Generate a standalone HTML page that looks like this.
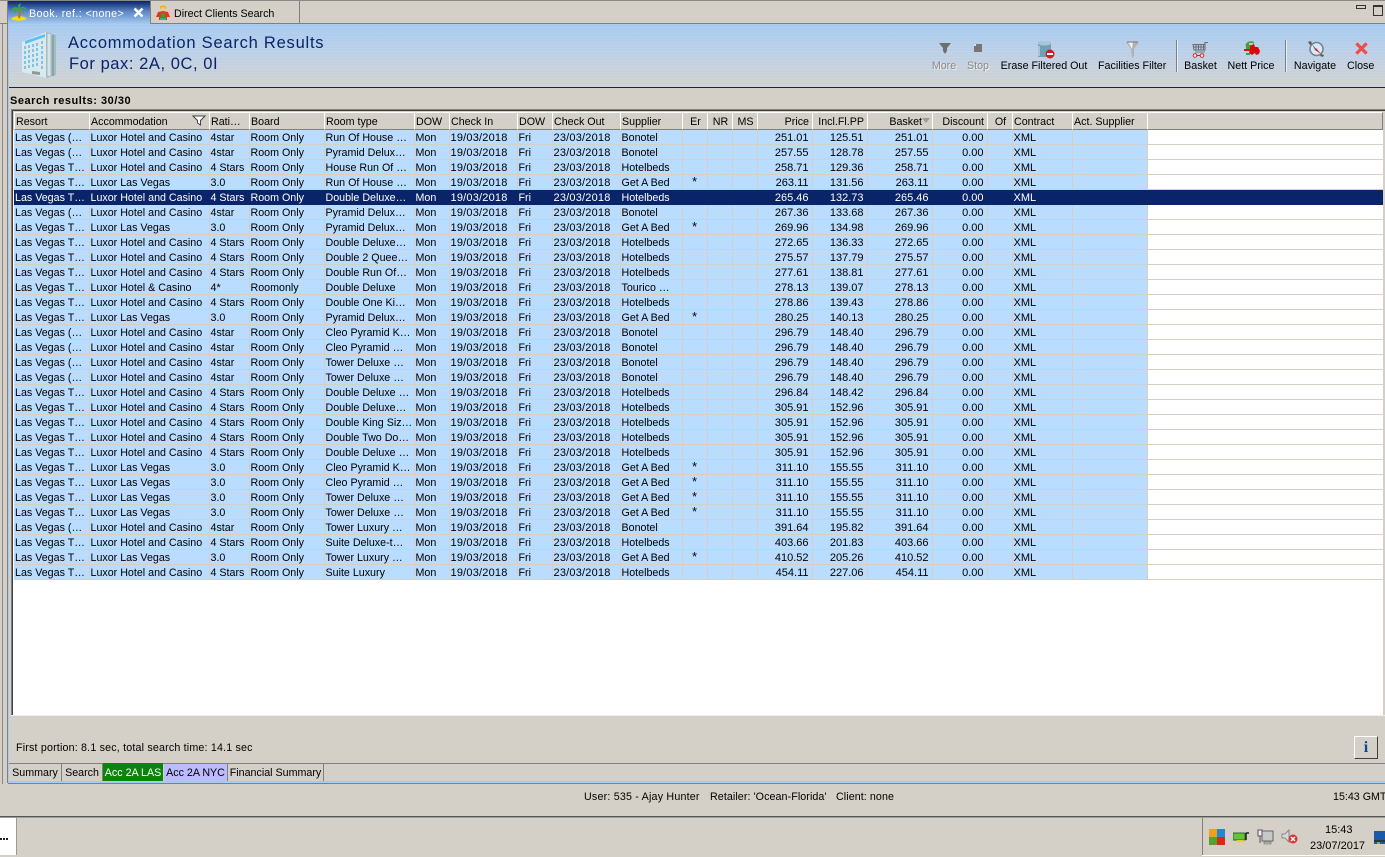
<!DOCTYPE html>
<html><head><meta charset="utf-8"><title>Accommodation Search Results</title>
<style>
html,body{margin:0;padding:0;width:1385px;height:857px;overflow:hidden;background:#d4d0c8}
body{position:relative;font:10.7px "Liberation Sans",Arial,sans-serif;color:#000}
div,svg{position:absolute}
.l{white-space:nowrap}
#hd div{position:absolute;top:0;height:16px;line-height:18px;background:#d4d0c8;border-top:1px solid #fff;border-left:1px solid #fff;border-right:1px solid #808080;border-bottom:1px solid #808080;padding:0 0 0 1px;white-space:nowrap;box-sizing:content-box;overflow:hidden}
#hd div.r{text-align:right}
table{position:absolute;left:14px;top:130px;border-collapse:collapse;table-layout:fixed;width:1369px;background:#fff}
td{height:12px;padding:2px 0 0 1px;border-right:1px solid #d4d0c8;border-bottom:1px solid #d4d0c8;background:#b9dcff;white-space:nowrap;overflow:hidden;line-height:12px}
td:nth-child(7),td:nth-child(9){font-size:11px;letter-spacing:.2px}
td:nth-child(n+14):nth-child(-n+17){text-align:right;padding:2px 3px 0 0;font-size:11px}
td:nth-child(11){text-align:center;padding:1px 0 0;height:13px;font-size:12.5px;line-height:13px;vertical-align:top}
td:nth-child(19){font-size:11px}
td:last-child{background:#fff;border-right:0}
tr.s td{background:#0a246a;color:#fff;border-color:#0a246a}
.t{text-align:center;white-space:nowrap;top:60px;height:13px;line-height:13px}
.b{position:absolute;top:763px;height:17px;line-height:18px;border-right:1px solid #808080;text-align:center;white-space:nowrap}
</style></head>
<body>
<!-- top chrome -->
<div style="left:0;top:0;width:1385px;height:1px;background:#8a8a88"></div>
<div style="left:0;top:23px;width:1385px;height:1px;background:#808080"></div>
<div style="left:2px;top:24px;width:1px;height:760px;background:#8a8a88"></div>
<div style="left:7px;top:1px;width:1px;height:782px;background:#808080"></div>
<div style="left:8px;top:24px;width:1px;height:758px;background:#a6caf0"></div>
<div style="left:8px;top:781px;width:1377px;height:2px;background:#a6caf0"></div>
<div style="left:8px;top:783px;width:1377px;height:1px;background:#808080"></div>
<!-- tabs -->
<div style="left:8px;top:1px;width:142px;height:23px;background:linear-gradient(#0a246a,#5d86c4 45%,#a6caf0)"></div>
<div style="left:150px;top:1px;width:1px;height:23px;background:#808080"></div>
<div style="left:299px;top:1px;width:1px;height:22px;background:#808080"></div>
<svg style="left:10px;top:3px" width="18" height="18" viewBox="0 0 18 18"><ellipse cx="9" cy="15.500" rx="7.500" ry="2.200" fill="#f5dc10"/><path d="M9 15C10 11 10 8 9.500 6" stroke="#b8741a" stroke-width="2" fill="none"/><path d="M9 6C6 3 3 4 1 8 4 6.500 6 6 9 6ZM9 6C7 2 9 1 11 0 10 3 10 4 9 6ZM9 6C12 3 15 3 17 7 14 5 12 5 9 6ZM9 6C6 6 4 8 4 11 6 9 7 8 9 6ZM9 6C12 6 14 8 14 11 12 9 11 8 9 6Z" fill="#2fb53c"/></svg>
<div class="l" style="left:29px;top:7px;color:#fff;height:14px;line-height:14px;letter-spacing:.4px">Book. ref.: &lt;none&gt;</div>
<svg style="left:133px;top:7px" width="11" height="11" viewBox="0 0 11 11"><path d="M1.500 1.500L9.500 9.500M9.500 1.500L1.500 9.500" stroke="#fff" stroke-width="2.600"/></svg>
<svg style="left:155px;top:4px" width="16" height="17" viewBox="0 0 16 17"><path d="M5 3C5 1 11 1 11 3V5H5Z" fill="#f0b010"/><circle cx="8" cy="5.500" r="2.500" fill="#f3c68a"/><path d="M3 8L8 7 13 8 15 13H12V16H4V13H1Z" fill="#e03818"/><rect x="6" y="9" width="4" height="4" fill="#30a040"/><rect x="5" y="14" width="6" height="2" fill="#30b0a0"/></svg>
<div class="l" style="left:174px;top:7px;height:14px;line-height:14px">Direct Clients Search</div>
<!-- window buttons -->
<div style="left:1356px;top:5px;width:8px;height:2px;border:1px solid #333;background:#d4d0c8"></div>
<div style="left:1373px;top:5px;width:8px;height:8px;border:1px solid #333;border-top-width:2px;background:#d4d0c8"></div>
<!-- band -->
<div style="left:9px;top:24px;width:1376px;height:63px;background:repeating-linear-gradient(rgba(255,255,255,.07) 0 1px,rgba(255,255,255,0) 1px 3px),linear-gradient(#a6caf0,#bcd0e8 45%,#d2d2d0)"></div>
<div style="left:9px;top:87px;width:1376px;height:1px;background:#0a246a"></div>
<svg style="left:22px;top:32px" width="35" height="46" viewBox="0 0 35 46"><path d="M0 10L24 0V46L0 40Z" fill="#dbe8ec"/><path d="M24 0L34 3V43L24 46Z" fill="#a2bcc0"/><path d="M27 2V44" stroke="#d5e4e6" stroke-width="3"/><path d="M31 3V44" stroke="#8aa4a8" stroke-width="2"/><path d="M3 9L23 2V5L3 12Z" fill="#5cc0f4"/><g fill="#7cc4ee"><path d="M2 14H4V17H2ZM2 19H4V22H2ZM2 24H4V27H2ZM2 29H4V32H2ZM2 34H4V37H2ZM6 13H8V16H6ZM6 18H8V21H6ZM6 23H8V26H6ZM6 28H8V31H6ZM6 33H8V36H6ZM10 12H12V15H10ZM10 17H12V20H10ZM10 22H12V25H10ZM10 27H12V30H10ZM10 32H12V35H10ZM14 11H16V14H14ZM14 16H16V19H14ZM14 21H16V24H14ZM14 26H16V29H14ZM14 31H16V34H14ZM19 9H21V12H19ZM19 14H21V17H19ZM19 19H21V22H19ZM19 24H21V27H19ZM19 29H21V32H19ZM19 34H21V37H19Z"/></g><path d="M10 39L18 40V43L10 42Z" fill="#8a9a9a"/></svg>
<div class="l" style="left:68px;top:34px;height:19px;line-height:19px;font-size:16.500px;letter-spacing:.77px;color:#0a246a">Accommodation Search Results</div>
<div class="l" style="left:69px;top:55px;height:19px;line-height:19px;font-size:16.500px;letter-spacing:.56px;color:#0a246a">For pax: 2A, 0C, 0I</div>
<!-- toolbar -->
<svg style="left:938px;top:43px" width="14" height="11" viewBox="0 0 14 11"><path d="M1 0H13L9 5V8L7 11 5 8V5Z" fill="#6e6e6e"/></svg>
<div style="left:974px;top:44px;width:8px;height:8px;background:#767676"></div>
<div style="left:974px;top:44px;width:2px;height:2px;background:#ddd"></div>
<div class="t" style="left:930px;width:28px;color:#8a8a8a;text-shadow:1px 1px 0 #eee">More</div>
<div class="t" style="left:965px;width:26px;color:#8a8a8a;text-shadow:1px 1px 0 #eee">Stop</div>
<svg style="left:1037px;top:41px" width="18" height="18" viewBox="0 0 18 18"><path d="M1 2C1 0 14 0 14 2V16H1Z" fill="#6ea0b8"/><ellipse cx="7.500" cy="2.500" rx="6.500" ry="2" fill="#a8c6d6"/><path d="M2 5V15" stroke="#b9d2de" stroke-width="1.500"/><circle cx="13" cy="13" r="4.500" fill="#d91a24"/><rect x="10" y="12" width="6" height="2" fill="#fff"/></svg>
<div class="t" style="left:1000px;width:88px">Erase Filtered Out</div>
<svg style="left:1126px;top:41px" width="13" height="17" viewBox="0 0 13 17"><path d="M0 1H13L8 8V15L6 17 5 8Z" fill="#b2b2b2"/><path d="M2 1H7L6 8Z" fill="#f0f0f0"/><path d="M1 1H12" stroke="#777"/></svg>
<div class="t" style="left:1098px;width:68px">Facilities Filter</div>
<div style="left:1176px;top:40px;width:1px;height:32px;background:#7a7f88"></div>
<div style="left:1177px;top:40px;width:1px;height:32px;background:#e8eef5"></div>
<svg style="left:1192px;top:41px" width="17" height="17" viewBox="0 0 17 17"><path d="M1 3.500H13V9H2ZM1.500 6H13M4 3.500V9M6.500 3.500V9M9 3.500V9M11.500 3.500V9M13 9V1.500H16" stroke="#6a6a70" stroke-width="1" fill="none"/><path d="M3 11H13" stroke="#777"/><circle cx="3" cy="14.500" r="1.800" fill="#fff" stroke="#d02020"/><circle cx="10" cy="14.500" r="1.800" fill="#fff" stroke="#d02020"/><path d="M5 14.500H8" stroke="#d02020"/></svg>
<div class="t" style="left:1183px;width:35px">Basket</div>
<svg style="left:1243px;top:40px" width="18" height="17" viewBox="0 0 18 17"><path d="M3 7C1 2 8 0 11 2L9 9H3Z" fill="#4b9b3c"/><path d="M6 3H10V5H6Z" fill="#b6d8a8"/><path d="M1 9H8V11H1Z" fill="#e01010"/><path d="M7 6L11 4 12 7 15 7 17 11 16 14 13 15 12 13 9 15 6 13 7 9Z" fill="#d80a0a"/><path d="M3 13H7V15H3Z" fill="#4b9b3c"/></svg>
<div class="t" style="left:1227px;width:48px">Nett Price</div>
<div style="left:1285px;top:40px;width:1px;height:32px;background:#7a7f88"></div>
<div style="left:1286px;top:40px;width:1px;height:32px;background:#e8eef5"></div>
<svg style="left:1307px;top:40px" width="18" height="18" viewBox="0 0 18 18"><circle cx="9.500" cy="9" r="6.500" fill="#dfe9f2" stroke="#6f8494" stroke-width="1.600"/><path d="M5 4L9 9 8 10Z" fill="#3060c0"/><path d="M9 8L14 14 8 10Z" fill="#d02020"/><path d="M1 2L4 1 5 4 3 5ZM14 14L17 15 16 17 13 16Z" fill="#6b5a40"/></svg>
<div class="t" style="left:1293px;width:44px">Navigate</div>
<svg style="left:1355px;top:42px" width="13" height="13" viewBox="0 0 13 13"><path d="M2.500 2.500L10.500 10.500M10.500 2.500L2.500 10.500" stroke="#ef4c4c" stroke-width="3.200" stroke-linecap="square"/></svg>
<div class="t" style="left:1347px;width:27px">Close</div>
<!-- search label -->
<div class="l" style="left:10px;top:94px;height:14px;line-height:14px;font-size:11px;font-weight:bold;letter-spacing:.53px">Search results: 30/30</div>
<!-- table frame -->
<div style="left:11px;top:109px;width:1372px;height:606px;background:#fff"></div>
<div style="left:11px;top:109px;width:1374px;height:1px;background:#808080"></div>
<div style="left:11px;top:110px;width:1374px;height:1px;background:#404040"></div>
<div style="left:11px;top:109px;width:1px;height:606px;background:#808080"></div>
<div style="left:12px;top:110px;width:1px;height:605px;background:#404040"></div>
<div style="left:11px;top:715px;width:1374px;height:1px;background:#f0eee8"></div>
<div style="left:13px;top:111px;width:1370px;height:19px;background:#d4d0c8"></div>
<div id="hd" style="left:14px;top:112px;width:1369px;height:18px">
<div style="left:0;width:73px">Resort</div>
<div style="left:75px;width:118px">Accommodation</div>
<div style="left:195px;width:38px">Rati…</div>
<div style="left:235px;width:73px">Board</div>
<div style="left:310px;width:88px">Room type</div>
<div style="left:400px;width:33px">DOW</div>
<div style="left:435px;width:66px">Check In</div>
<div style="left:503px;width:33px">DOW</div>
<div style="left:538px;width:66px">Check Out</div>
<div style="left:606px;width:60px">Supplier</div>
<div style="left:668px;width:23px;text-align:center">Er</div>
<div style="left:693px;width:23px;text-align:center">NR</div>
<div style="left:718px;width:23px;text-align:center">MS</div>
<div class="r" style="left:743px;width:50px;padding-right:3px">Price</div>
<div class="r" style="left:798px;width:50px;padding-right:3px">Incl.Fl.PP</div>
<div class="r" style="left:853px;width:53px;padding-right:11px">Basket</div>
<div class="r" style="left:918px;width:50px;padding-right:3px">Discount</div>
<div style="left:973px;width:23px;text-align:center">Of</div>
<div style="left:998px;width:58px">Contract</div>
<div style="left:1058px;width:73px">Act. Supplier</div>
<div style="left:1133px;width:233px"></div>
</div>
<svg style="left:192px;top:115px" width="14" height="11" viewBox="0 0 14 11"><path d="M1 1H13L8.500 5.500V10L5.500 8V5.500Z" fill="#fff" stroke="#444"/></svg>
<svg style="left:922px;top:118px" width="8" height="5" viewBox="0 0 8 5"><path d="M0 0H8L4 5Z" fill="#9a9a9a"/></svg>
<table>
<colgroup><col style="width:75px"><col style="width:120px"><col style="width:40px"><col style="width:75px"><col style="width:90px"><col style="width:35px"><col style="width:68px"><col style="width:35px"><col style="width:68px"><col style="width:62px"><col style="width:25px"><col style="width:25px"><col style="width:25px"><col style="width:55px"><col style="width:55px"><col style="width:65px"><col style="width:55px"><col style="width:25px"><col style="width:60px"><col style="width:75px"><col></colgroup>
<tr><td>Las Vegas (…<td>Luxor Hotel and Casino<td>4star<td>Room Only<td>Run Of House …<td>Mon<td>19/03/2018<td>Fri<td>23/03/2018<td>Bonotel<td><td><td><td>251.01<td>125.51<td>251.01<td>0.00<td><td>XML<td><td></tr>
<tr><td>Las Vegas (…<td>Luxor Hotel and Casino<td>4star<td>Room Only<td>Pyramid Delux…<td>Mon<td>19/03/2018<td>Fri<td>23/03/2018<td>Bonotel<td><td><td><td>257.55<td>128.78<td>257.55<td>0.00<td><td>XML<td><td></tr>
<tr><td>Las Vegas T…<td>Luxor Hotel and Casino<td>4 Stars<td>Room Only<td>House Run Of …<td>Mon<td>19/03/2018<td>Fri<td>23/03/2018<td>Hotelbeds<td><td><td><td>258.71<td>129.36<td>258.71<td>0.00<td><td>XML<td><td></tr>
<tr><td>Las Vegas T…<td>Luxor Las Vegas<td>3.0<td>Room Only<td>Run Of House …<td>Mon<td>19/03/2018<td>Fri<td>23/03/2018<td>Get A Bed<td>*<td><td><td>263.11<td>131.56<td>263.11<td>0.00<td><td>XML<td><td></tr>
<tr class="s"><td>Las Vegas T…<td>Luxor Hotel and Casino<td>4 Stars<td>Room Only<td>Double Deluxe…<td>Mon<td>19/03/2018<td>Fri<td>23/03/2018<td>Hotelbeds<td><td><td><td>265.46<td>132.73<td>265.46<td>0.00<td><td>XML<td><td></tr>
<tr><td>Las Vegas (…<td>Luxor Hotel and Casino<td>4star<td>Room Only<td>Pyramid Delux…<td>Mon<td>19/03/2018<td>Fri<td>23/03/2018<td>Bonotel<td><td><td><td>267.36<td>133.68<td>267.36<td>0.00<td><td>XML<td><td></tr>
<tr><td>Las Vegas T…<td>Luxor Las Vegas<td>3.0<td>Room Only<td>Pyramid Delux…<td>Mon<td>19/03/2018<td>Fri<td>23/03/2018<td>Get A Bed<td>*<td><td><td>269.96<td>134.98<td>269.96<td>0.00<td><td>XML<td><td></tr>
<tr><td>Las Vegas T…<td>Luxor Hotel and Casino<td>4 Stars<td>Room Only<td>Double Deluxe…<td>Mon<td>19/03/2018<td>Fri<td>23/03/2018<td>Hotelbeds<td><td><td><td>272.65<td>136.33<td>272.65<td>0.00<td><td>XML<td><td></tr>
<tr><td>Las Vegas T…<td>Luxor Hotel and Casino<td>4 Stars<td>Room Only<td>Double 2 Quee…<td>Mon<td>19/03/2018<td>Fri<td>23/03/2018<td>Hotelbeds<td><td><td><td>275.57<td>137.79<td>275.57<td>0.00<td><td>XML<td><td></tr>
<tr><td>Las Vegas T…<td>Luxor Hotel and Casino<td>4 Stars<td>Room Only<td>Double Run Of…<td>Mon<td>19/03/2018<td>Fri<td>23/03/2018<td>Hotelbeds<td><td><td><td>277.61<td>138.81<td>277.61<td>0.00<td><td>XML<td><td></tr>
<tr><td>Las Vegas T…<td>Luxor Hotel &amp; Casino<td>4*<td>Roomonly<td>Double Deluxe<td>Mon<td>19/03/2018<td>Fri<td>23/03/2018<td>Tourico …<td><td><td><td>278.13<td>139.07<td>278.13<td>0.00<td><td>XML<td><td></tr>
<tr><td>Las Vegas T…<td>Luxor Hotel and Casino<td>4 Stars<td>Room Only<td>Double One Ki…<td>Mon<td>19/03/2018<td>Fri<td>23/03/2018<td>Hotelbeds<td><td><td><td>278.86<td>139.43<td>278.86<td>0.00<td><td>XML<td><td></tr>
<tr><td>Las Vegas T…<td>Luxor Las Vegas<td>3.0<td>Room Only<td>Pyramid Delux…<td>Mon<td>19/03/2018<td>Fri<td>23/03/2018<td>Get A Bed<td>*<td><td><td>280.25<td>140.13<td>280.25<td>0.00<td><td>XML<td><td></tr>
<tr><td>Las Vegas (…<td>Luxor Hotel and Casino<td>4star<td>Room Only<td>Cleo Pyramid K…<td>Mon<td>19/03/2018<td>Fri<td>23/03/2018<td>Bonotel<td><td><td><td>296.79<td>148.40<td>296.79<td>0.00<td><td>XML<td><td></tr>
<tr><td>Las Vegas (…<td>Luxor Hotel and Casino<td>4star<td>Room Only<td>Cleo Pyramid …<td>Mon<td>19/03/2018<td>Fri<td>23/03/2018<td>Bonotel<td><td><td><td>296.79<td>148.40<td>296.79<td>0.00<td><td>XML<td><td></tr>
<tr><td>Las Vegas (…<td>Luxor Hotel and Casino<td>4star<td>Room Only<td>Tower Deluxe …<td>Mon<td>19/03/2018<td>Fri<td>23/03/2018<td>Bonotel<td><td><td><td>296.79<td>148.40<td>296.79<td>0.00<td><td>XML<td><td></tr>
<tr><td>Las Vegas (…<td>Luxor Hotel and Casino<td>4star<td>Room Only<td>Tower Deluxe …<td>Mon<td>19/03/2018<td>Fri<td>23/03/2018<td>Bonotel<td><td><td><td>296.79<td>148.40<td>296.79<td>0.00<td><td>XML<td><td></tr>
<tr><td>Las Vegas T…<td>Luxor Hotel and Casino<td>4 Stars<td>Room Only<td>Double Deluxe …<td>Mon<td>19/03/2018<td>Fri<td>23/03/2018<td>Hotelbeds<td><td><td><td>296.84<td>148.42<td>296.84<td>0.00<td><td>XML<td><td></tr>
<tr><td>Las Vegas T…<td>Luxor Hotel and Casino<td>4 Stars<td>Room Only<td>Double Deluxe…<td>Mon<td>19/03/2018<td>Fri<td>23/03/2018<td>Hotelbeds<td><td><td><td>305.91<td>152.96<td>305.91<td>0.00<td><td>XML<td><td></tr>
<tr><td>Las Vegas T…<td>Luxor Hotel and Casino<td>4 Stars<td>Room Only<td>Double King Siz…<td>Mon<td>19/03/2018<td>Fri<td>23/03/2018<td>Hotelbeds<td><td><td><td>305.91<td>152.96<td>305.91<td>0.00<td><td>XML<td><td></tr>
<tr><td>Las Vegas T…<td>Luxor Hotel and Casino<td>4 Stars<td>Room Only<td>Double Two Do…<td>Mon<td>19/03/2018<td>Fri<td>23/03/2018<td>Hotelbeds<td><td><td><td>305.91<td>152.96<td>305.91<td>0.00<td><td>XML<td><td></tr>
<tr><td>Las Vegas T…<td>Luxor Hotel and Casino<td>4 Stars<td>Room Only<td>Double Deluxe …<td>Mon<td>19/03/2018<td>Fri<td>23/03/2018<td>Hotelbeds<td><td><td><td>305.91<td>152.96<td>305.91<td>0.00<td><td>XML<td><td></tr>
<tr><td>Las Vegas T…<td>Luxor Las Vegas<td>3.0<td>Room Only<td>Cleo Pyramid K…<td>Mon<td>19/03/2018<td>Fri<td>23/03/2018<td>Get A Bed<td>*<td><td><td>311.10<td>155.55<td>311.10<td>0.00<td><td>XML<td><td></tr>
<tr><td>Las Vegas T…<td>Luxor Las Vegas<td>3.0<td>Room Only<td>Cleo Pyramid …<td>Mon<td>19/03/2018<td>Fri<td>23/03/2018<td>Get A Bed<td>*<td><td><td>311.10<td>155.55<td>311.10<td>0.00<td><td>XML<td><td></tr>
<tr><td>Las Vegas T…<td>Luxor Las Vegas<td>3.0<td>Room Only<td>Tower Deluxe …<td>Mon<td>19/03/2018<td>Fri<td>23/03/2018<td>Get A Bed<td>*<td><td><td>311.10<td>155.55<td>311.10<td>0.00<td><td>XML<td><td></tr>
<tr><td>Las Vegas T…<td>Luxor Las Vegas<td>3.0<td>Room Only<td>Tower Deluxe …<td>Mon<td>19/03/2018<td>Fri<td>23/03/2018<td>Get A Bed<td>*<td><td><td>311.10<td>155.55<td>311.10<td>0.00<td><td>XML<td><td></tr>
<tr><td>Las Vegas (…<td>Luxor Hotel and Casino<td>4star<td>Room Only<td>Tower Luxury …<td>Mon<td>19/03/2018<td>Fri<td>23/03/2018<td>Bonotel<td><td><td><td>391.64<td>195.82<td>391.64<td>0.00<td><td>XML<td><td></tr>
<tr><td>Las Vegas T…<td>Luxor Hotel and Casino<td>4 Stars<td>Room Only<td>Suite Deluxe-t…<td>Mon<td>19/03/2018<td>Fri<td>23/03/2018<td>Hotelbeds<td><td><td><td>403.66<td>201.83<td>403.66<td>0.00<td><td>XML<td><td></tr>
<tr><td>Las Vegas T…<td>Luxor Las Vegas<td>3.0<td>Room Only<td>Tower Luxury …<td>Mon<td>19/03/2018<td>Fri<td>23/03/2018<td>Get A Bed<td>*<td><td><td>410.52<td>205.26<td>410.52<td>0.00<td><td>XML<td><td></tr>
<tr><td>Las Vegas T…<td>Luxor Hotel and Casino<td>4 Stars<td>Room Only<td>Suite Luxury<td>Mon<td>19/03/2018<td>Fri<td>23/03/2018<td>Hotelbeds<td><td><td><td>454.11<td>227.06<td>454.11<td>0.00<td><td>XML<td><td></tr>
</table>
<!-- footer -->
<div class="l" style="left:16px;top:741px;height:14px;line-height:14px;letter-spacing:.18px">First portion: 8.1 sec, total search time: 14.1 sec</div>
<div style="left:1354px;top:736px;width:22px;height:21px;background:#d4d0c8;border-top:1px solid #fff;border-left:1px solid #fff;border-right:1px solid #404040;border-bottom:1px solid #404040;text-align:center;font:bold 16px/21px 'Liberation Serif',serif;color:#0a4a8a">i</div>
<div style="left:9px;top:763px;width:1376px;height:1px;background:#808080"></div>
<div class="b" style="left:9px;width:52px;top:764px">Summary</div>
<div class="b" style="left:62px;width:40px;top:764px">Search</div>
<div class="b" style="left:103px;width:60px;top:763px;height:18px;background:#0a840a;color:#fff;border:0;line-height:20px">Acc 2A LAS</div>
<div class="b" style="left:164px;width:63px;top:764px;background:#bbbbff">Acc 2A NYC</div>
<div class="b" style="left:228px;width:95px;top:764px">Financial Summary</div>
<!-- status bar -->
<div class="l" style="left:584px;top:790px;height:14px;line-height:14px;letter-spacing:.2px">User: 535 - Ajay Hunter</div>
<div class="l" style="left:710px;top:790px;height:14px;line-height:14px;letter-spacing:.08px">Retailer: 'Ocean-Florida'</div>
<div class="l" style="left:836px;top:790px;height:14px;line-height:14px;letter-spacing:.08px">Client: none</div>
<div class="l" style="left:1333px;top:790px;height:14px;line-height:14px">15:43 GMT</div>
<!-- taskbar -->
<div style="left:0;top:816px;width:1385px;height:1px;background:#555"></div>
<div style="left:0;top:817px;width:1385px;height:1px;background:#a09e98"></div>
<div style="left:0;top:818px;width:16px;height:37px;background:#fff;border-right:1px solid #999"></div>
<div style="left:0;top:838px;width:2px;height:2px;background:#222"></div>
<div style="left:3px;top:838px;width:2px;height:2px;background:#222"></div>
<div style="left:6px;top:838px;width:2px;height:2px;background:#222"></div>
<div style="left:1202px;top:818px;width:1px;height:37px;background:#808080"></div>
<div style="left:1202px;top:855px;width:183px;height:1px;background:#fff"></div>
<svg style="left:1209px;top:829px" width="16" height="16" viewBox="0 0 16 16"><rect width="8" height="8" fill="#f0a020"/><rect x="8" width="8" height="8" fill="#2a86c8"/><rect y="8" width="8" height="8" fill="#58a030"/><rect x="8" y="8" width="8" height="8" fill="#d82818"/></svg>
<svg style="left:1233px;top:832px" width="16" height="11" viewBox="0 0 16 11"><rect y="1" width="12" height="7" fill="#64c23c" stroke="#2a6a2a"/><rect x="4" y="8" width="7" height="2" fill="#e8d020"/><path d="M13 1H16M13 1V8" stroke="#222" stroke-width="1.500"/></svg>
<svg style="left:1257px;top:829px" width="17" height="16" viewBox="0 0 17 16"><rect x="5" y="2" width="11" height="10" fill="#c8c8c8" stroke="#666"/><path d="M7 13H14V15H7Z" fill="#bbb" stroke="#666" stroke-width=".6"/><path d="M1 7V1H5V7H1ZM3 7V14" stroke="#555" fill="#eee" stroke-width="1"/></svg>
<svg style="left:1281px;top:829px" width="17" height="16" viewBox="0 0 17 16"><path d="M1 5H4L8 1V13L4 9H1Z" fill="#d8d8d8" stroke="#888"/><circle cx="12" cy="10" r="4.500" fill="#e03030"/><path d="M10 8L14 12M14 8L10 12" stroke="#fff" stroke-width="1.500"/></svg>
<div class="l" style="left:1325px;top:823px;height:14px;line-height:14px;font-size:11px">15:43</div>
<div class="l" style="left:1310px;top:839px;height:14px;line-height:14px;font-size:11px">23/07/2017</div>
<svg style="left:1374px;top:831px" width="11" height="13" viewBox="0 0 11 13"><rect width="11" height="13" fill="#1a5aa8"/><rect y="9" width="11" height="2" fill="#333"/><rect x="3" y="11" width="3" height="2" fill="#88aa44"/></svg>
</body></html>
